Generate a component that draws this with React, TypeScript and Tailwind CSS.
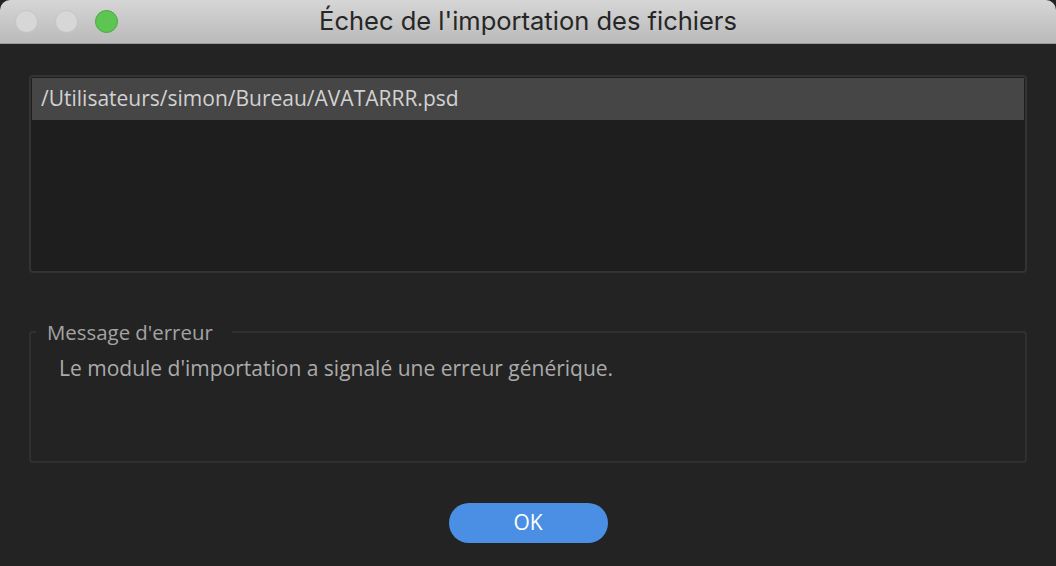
import React from 'react';

const Light = ({ on }: { on?: boolean }) => (
  <span
    className={
      on
        ? 'w-[23px] h-[23px] rounded-full bg-[#5dc653] border border-[#4ba743]'
        : 'w-[23px] h-[23px] rounded-full bg-[#d7d7d7] border border-[#c4c4c4]'
    }
  />
);

export default function App() {
  return (
    <div className="w-[1056px] h-[566px] flex flex-col bg-[#232323] overflow-hidden" style={{ fontFamily: '"Open Sans", "Noto Sans", sans-serif' }}>
      <div className="relative h-[44px] shrink-0 flex items-center rounded-t-[10px] bg-gradient-to-b from-[#d6d6d6] to-[#bababa] border-b border-[#9a9a9a]">
        <div className="flex items-center gap-[17px] pl-[15px]">
          <Light />
          <Light />
          <Light on />
        </div>
        <div className="absolute inset-0 flex items-center justify-center text-[25.5px] text-[#262626] pb-[1px]" style={{ fontFamily: '"Inter", "Liberation Sans", sans-serif' }}>
          Échec de l'importation des fichiers
        </div>
      </div>

      <div className="flex flex-col px-[29px] pt-[31px]">
        <div className="h-[198px] rounded-[4px] border-2 border-[#333333] bg-[#1e1e1e] p-[1px]">
          <div className="h-[42px] bg-[#464646] flex items-center pl-[9px] text-[21px] text-[#d2d2d2]">
            /Utilisateurs/simon/Bureau/AVATARRR.psd
          </div>
        </div>

        <fieldset className="mt-[46px] h-[144px] rounded-[4px] border-2 border-[#303030] px-[5px]">
          <legend className="pl-[11px] pr-[19px] text-[20.4px] text-[#a3a3a3] leading-[26px]">Message d'erreur</legend>
          <div className="pl-[23px] text-[21px] text-[#ababab] leading-[28px] mt-[9px]">
            Le module d'importation a signalé une erreur générique.
          </div>
        </fieldset>

        <div className="flex justify-center mt-[40px]">
          <button className="w-[159px] h-[40px] rounded-full bg-[#4a8fe3] text-white text-[21px] flex items-center justify-center">
            OK
          </button>
        </div>
      </div>
    </div>
  );
}
